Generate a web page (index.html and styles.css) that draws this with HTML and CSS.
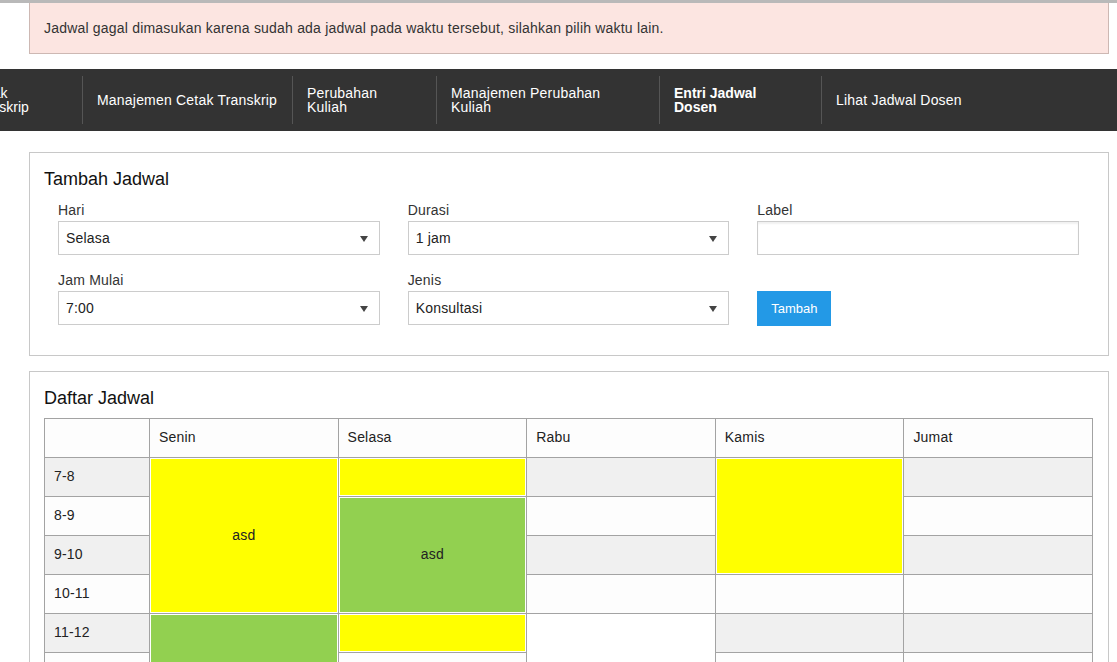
FILE: index.html
```html
<!DOCTYPE html>
<html lang="id">
<head>
  <meta charset="UTF-8" />
  <meta name="viewport" content="width=device-width, initial-scale=1.0"/>
  <title>Entri Jadwal Dosen</title>
  <link rel="stylesheet" href="styles.css">
</head>
<body>

<div class="topline"></div>

<div class="page">
  <div class="alert">Jadwal gagal dimasukan karena sudah ada jadwal pada waktu tersebut, silahkan pilih waktu lain.</div>
</div>

<nav class="navbar">
  <ul class="nav-list">
    <li class="nav-item w-1"><a>Cetak<br>Transkrip</a></li>
    <li class="nav-item w-2"><a>Manajemen Cetak Transkrip</a></li>
    <li class="nav-item w-3"><a>Perubahan<br>Kuliah</a></li>
    <li class="nav-item w-4"><a>Manajemen Perubahan<br>Kuliah</a></li>
    <li class="nav-item w-5 active"><a>Entri Jadwal<br>Dosen</a></li>
    <li class="nav-item w-6"><a>Lihat Jadwal Dosen</a></li>
  </ul>
</nav>

<div class="page">

  <div class="card">
    <h2 class="card-title">Tambah Jadwal</h2>

    <form class="form-grid" id="formJadwal">
      <div class="field">
        <label for="hari">Hari</label>
        <div class="select-wrap">
          <select id="hari">
            <option>Senin</option>
            <option selected>Selasa</option>
            <option>Rabu</option>
            <option>Kamis</option>
            <option>Jumat</option>
          </select>
        </div>
      </div>

      <div class="field">
        <label for="durasi">Durasi</label>
        <div class="select-wrap">
          <select id="durasi">
            <option selected>1 jam</option>
            <option>2 jam</option>
            <option>3 jam</option>
          </select>
        </div>
      </div>

      <div class="field">
        <label for="label">Label</label>
        <input type="text" id="label" />
      </div>

      <div class="field">
        <label for="jam">Jam Mulai</label>
        <div class="select-wrap">
          <select id="jam">
            <option selected>7:00</option>
            <option>8:00</option>
            <option>9:00</option>
            <option>10:00</option>
            <option>11:00</option>
          </select>
        </div>
      </div>

      <div class="field">
        <label for="jenis">Jenis</label>
        <div class="select-wrap">
          <select id="jenis">
            <option selected>Konsultasi</option>
            <option>Kuliah</option>
          </select>
        </div>
      </div>

      <div class="field field-btn">
        <button type="submit" class="btn">Tambah</button>
      </div>
    </form>
  </div>

  <div class="card">
    <h2 class="card-title">Daftar Jadwal</h2>

    <table class="jadwal">
      <colgroup>
        <col class="col-jam">
        <col><col><col><col><col>
      </colgroup>
      <thead>
        <tr>
          <th></th>
          <th>Senin</th>
          <th>Selasa</th>
          <th>Rabu</th>
          <th>Kamis</th>
          <th>Jumat</th>
        </tr>
      </thead>
      <tbody>
        <tr>
          <td>7-8</td>
          <td class="ev yellow" rowspan="4">asd</td>
          <td class="ev yellow"></td>
          <td></td>
          <td class="ev yellow" rowspan="3"></td>
          <td></td>
        </tr>
        <tr>
          <td>8-9</td>
          <td class="ev green" rowspan="3">asd</td>
          <td></td>
          <td></td>
        </tr>
        <tr>
          <td>9-10</td>
          <td></td>
          <td></td>
        </tr>
        <tr>
          <td>10-11</td>
          <td></td>
          <td></td>
          <td></td>
        </tr>
        <tr>
          <td>11-12</td>
          <td class="ev green" rowspan="2"></td>
          <td class="ev yellow"></td>
          <td class="blank" rowspan="2"></td>
          <td></td>
          <td></td>
        </tr>
        <tr>
          <td>12-13</td>
          <td></td>
          <td></td>
          <td></td>
        </tr>
      </tbody>
    </table>
  </div>

</div>

<script>
  document.getElementById("formJadwal").addEventListener("submit", function (e) {
    e.preventDefault();
  });
</script>

</body>
</html>
```

FILE: styles.css
```css
* {
  box-sizing: border-box;
}

body {
  margin: 0;
  font-family: 'Liberation Sans', Arial, sans-serif;
  font-size: 14px;
  letter-spacing: 0.2px;
  color: #333;
  background-color: #ffffff;
  overflow: hidden;
}

.topline {
  height: 3px;
  background: #b9b9b9;
}

.page {
  padding: 0 8px 0 29px;
}

.alert {
  background: #fce5e1;
  border: 1px solid #cdb8b3;
  border-top: none;
  padding: 15px 14px;
  line-height: 20px;
  color: #333;
  margin-bottom: 15px;
}

/* navbar */
.navbar {
  background: #333333;
  height: 62px;
  margin-bottom: 21px;
  overflow: hidden;
}

.nav-list {
  list-style: none;
  margin: 0 0 0 -44px;
  padding: 0;
  display: flex;
}

.nav-item {
  padding: 7px 0;
  flex-shrink: 0;
}

.nav-item a {
  display: flex;
  align-items: center;
  height: 48px;
  padding: 0 15px 0 14px;
  border-left: 1px solid #555;
  color: #fff;
  line-height: 14px;
  white-space: nowrap;
  cursor: pointer;
}

.nav-item.w-1 a {
  border-left: none;
  padding-left: 15px;
  letter-spacing: 0;
}

.nav-item.active a {
  font-weight: bold;
  letter-spacing: 0;
}

.w-1 { width: 126px; }
.w-2 { width: 210px; }
.w-3 { width: 144px; }
.w-4 { width: 223px; }
.w-5 { width: 162px; }
.w-6 { width: 200px; }

/* cards */
.card {
  border: 1px solid #c8c8c8;
  padding: 16px 15px 15px 14px;
  margin-bottom: 15px;
  background: #fff;
}

.card-title {
  font-size: 18px;
  line-height: 20px;
  font-weight: normal;
  letter-spacing: 0;
  color: #111;
  margin: 0 0 11px;
}

.form-grid {
  display: grid;
  grid-template-columns: repeat(3, 1fr);
  column-gap: 28px;
  row-gap: 15px;
  padding: 0 14px 14px;
}

.field label {
  display: block;
  line-height: 20px;
  margin-bottom: 1px;
  color: #333;
}

.select-wrap {
  position: relative;
}

.select-wrap::after {
  content: "";
  position: absolute;
  right: 12px;
  top: 15px;
  border-left: 4px solid transparent;
  border-right: 4px solid transparent;
  border-top: 6px solid #444;
  pointer-events: none;
}

select,
input {
  display: block;
  width: 100%;
  height: 34px;
  border: 1px solid #ccc;
  border-radius: 0;
  background: #fff;
  font-family: inherit;
  font-size: 14px;
  letter-spacing: 0.2px;
  color: #222;
  padding: 0 7px;
  -webkit-appearance: none;
  appearance: none;
  outline: none;
}

input {
  box-shadow: inset 0 2px 2px rgba(0,0,0,0.06);
}

.field-btn {
  padding-top: 21px;
}

.btn {
  width: 74px;
  height: 35px;
  background-color: #2399e6;
  color: #fff;
  border: none;
  border-radius: 0;
  font-family: inherit;
  font-size: 13px;
  cursor: pointer;
}

.btn:hover {
  background-color: #1b85cc;
}

/* jadwal table */
.jadwal {
  width: 100%;
  border-collapse: collapse;
  table-layout: fixed;
  color: #222;
  margin-top: -1px;
}

.col-jam {
  width: 105px;
}

.jadwal th,
.jadwal td {
  border: 1px solid #a3a3a3;
  height: 39px;
  padding: 0 9px 2px;
  text-align: left;
  font-weight: normal;
  background: #fdfdfd;
}

.jadwal tbody tr:nth-child(odd) td {
  background: #f0f0f0;
}

.jadwal tbody tr td.blank {
  background: #fff;
}

.jadwal tbody tr td.ev {
  text-align: center;
  box-shadow: inset 0 0 0 1px #fff;
}

.jadwal tbody tr td.yellow {
  background: #ffff00;
}

.jadwal tbody tr td.green {
  background: #92d050;
}
```
